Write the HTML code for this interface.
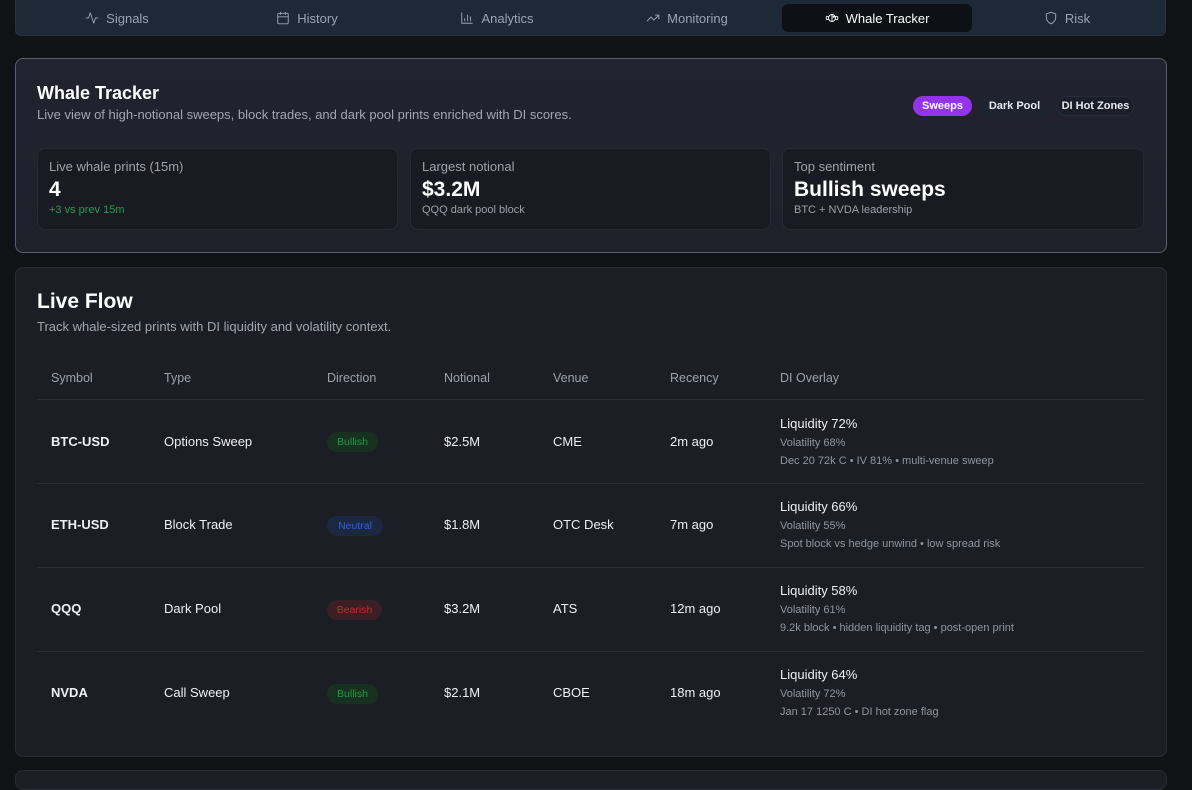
<!DOCTYPE html>
<html><head><meta charset="utf-8"><style>
*{box-sizing:border-box;margin:0;padding:0}
body{width:1192px;height:773px;background:#111216;font-family:"Liberation Sans","DejaVu Sans",sans-serif;color:#f1f3f6;position:relative;overflow:hidden}
.nav{position:absolute;left:15px;top:0;width:1151px;height:36px;background:#1e2938;border:1px solid #27323f;border-top:none;border-radius:0 0 6px 6px}
.tab{position:absolute;top:4px;height:28px;width:190px;display:flex;align-items:center;justify-content:center;gap:7px;font-size:13px;color:#9aa5b3}
.tab svg{width:14px;height:14px;stroke:currentColor;fill:none;stroke-width:1.6;stroke-linecap:round;stroke-linejoin:round}
.tab.act{background:#0e1015;color:#fff;border-radius:6px}
.card1{position:absolute;left:15px;top:58px;width:1152px;height:195px;border:1px solid #5d5a72;border-radius:8px;background:linear-gradient(180deg,#23232f,#1e202a)}
h1{position:absolute;font-weight:600;color:#fff}
.sub{position:absolute;font-size:13px;color:#a0a7b3}
.chip{position:absolute;top:37px;height:20px;border-radius:10px;font-size:11px;font-weight:700;display:flex;align-items:center;justify-content:center;color:#e8eaee;background:#1d2330}
.stat{position:absolute;top:89px;height:82px;width:361px;background:#1a1b22;border:1px solid #272a33;border-radius:8px;padding:10px 11px}
.stat .l{font-size:13px;color:#9ba2ae}
.stat .v{font-size:21px;font-weight:600;color:#fff;margin-top:3px;line-height:26px}
.stat .s{font-size:11px;color:#9aa1ac;margin-top:1px}
.card2{position:absolute;left:15px;top:267px;width:1152px;height:490px;background:#1b1e25;border:1px solid #272c36;border-radius:8px}
.th{position:absolute;top:103px;font-size:12.5px;color:#9ba2ae}
.line{position:absolute;left:21px;width:1107px;height:1px;background:#282d37}
.cell{position:absolute;font-size:13px;color:#eef0f3}
.b{font-weight:700}
.pill{position:absolute;height:20px;border-radius:10px;font-size:10.5px;display:flex;align-items:center;justify-content:center}
.liq{position:absolute;font-size:13px;color:#eef0f3}
.sm{position:absolute;font-size:11px;color:#8e96a2}
.card3{position:absolute;left:15px;top:770px;width:1152px;height:20px;background:#1b1e25;border:1px solid #272c36;border-radius:8px}
</style></head><body>
<div class="nav">
<div class="tab" style="left:6px"><svg viewBox="0 0 24 24"><path d="M22 12h-4l-3 9L9 3l-3 9H2"/></svg>Signals</div>
<div class="tab" style="left:196px"><svg viewBox="0 0 24 24"><rect x="3" y="4" width="18" height="18" rx="2"/><path d="M16 2v4M8 2v4M3 10h18"/></svg>History</div>
<div class="tab" style="left:386px"><svg viewBox="0 0 24 24"><path d="M3 3v18h18M8 17v-4M13 17V7M18 17v-7"/></svg>Analytics</div>
<div class="tab" style="left:576px"><svg viewBox="0 0 24 24"><path d="M22 7l-8.5 8.5-5-5L2 17M16 7h6v6"/></svg>Monitoring</div>
<div class="tab act" style="left:766px"><svg viewBox="0 0 24 24"><circle cx="12" cy="12" r="6"/><path d="M12 6v12M6 10c-3-2-4 0-4 2s1 4 4 2M18 10c3-2 4 0 4 2s-1 4-4 2"/><circle cx="15" cy="10" r="1"/></svg>Whale Tracker</div>
<div class="tab" style="left:956px"><svg viewBox="0 0 24 24"><path d="M12 22s8-4 8-10V5l-8-3-8 3v7c0 6 8 10 8 10z"/></svg>Risk</div>
</div>

<div class="card1">
<h1 style="left:21px;top:24px;font-size:18px">Whale Tracker</h1>
<div class="sub" style="left:21px;top:48px">Live view of high-notional sweeps, block trades, and dark pool prints enriched with DI scores.</div>
<div class="chip" style="left:897px;width:59px;background:#9333ea;color:#fff">Sweeps</div>
<div class="chip" style="left:963px;width:71px">Dark Pool</div>
<div class="chip" style="left:1041px;width:77px;background:#1a1e28;border:1px solid #262b36">DI Hot Zones</div>
<div class="stat" style="left:21px"><div class="l">Live whale prints (15m)</div><div class="v">4</div><div class="s" style="color:#22a04a">+3 vs prev 15m</div></div>
<div class="stat" style="left:394px"><div class="l">Largest notional</div><div class="v">$3.2M</div><div class="s">QQQ dark pool block</div></div>
<div class="stat" style="left:766px;width:362px"><div class="l">Top sentiment</div><div class="v">Bullish sweeps</div><div class="s">BTC + NVDA leadership</div></div>
</div>

<div class="card2">
<h1 style="left:21px;top:22px;font-size:21px">Live Flow</h1>
<div class="sub" style="left:21px;top:51px">Track whale-sized prints with DI liquidity and volatility context.</div>
<div class="th" style="left:35px">Symbol</div><div class="th" style="left:148px">Type</div><div class="th" style="left:311px">Direction</div><div class="th" style="left:428px">Notional</div><div class="th" style="left:537px">Venue</div><div class="th" style="left:654px">Recency</div><div class="th" style="left:764px">DI Overlay</div>
<div class="line" style="top:131px"></div>
<div class="line" style="top:215px"></div>
<div class="line" style="top:299px"></div>
<div class="line" style="top:383px"></div>

<div class="cell b" style="left:35px;top:166px">BTC-USD</div><div class="cell" style="left:148px;top:166px">Options Sweep</div>
<div class="pill" style="left:311px;top:164px;width:51px;background:#17301f;color:#1f9d46">Bullish</div>
<div class="cell" style="left:428px;top:166px">$2.5M</div><div class="cell" style="left:537px;top:166px">CME</div><div class="cell" style="left:654px;top:166px">2m ago</div>
<div class="liq" style="left:764px;top:148px">Liquidity 72%</div><div class="sm" style="left:764px;top:169px">Volatility 68%</div><div class="sm" style="left:764px;top:187px">Dec 20 72k C • IV 81% • multi-venue sweep</div>

<div class="cell b" style="left:35px;top:249px">ETH-USD</div><div class="cell" style="left:148px;top:249px">Block Trade</div>
<div class="pill" style="left:311px;top:248px;width:56px;background:#1b2840;color:#2f5fe0">Neutral</div>
<div class="cell" style="left:428px;top:249px">$1.8M</div><div class="cell" style="left:537px;top:249px">OTC Desk</div><div class="cell" style="left:654px;top:249px">7m ago</div>
<div class="liq" style="left:764px;top:231px">Liquidity 66%</div><div class="sm" style="left:764px;top:252px">Volatility 55%</div><div class="sm" style="left:764px;top:270px">Spot block vs hedge unwind • low spread risk</div>

<div class="cell b" style="left:35px;top:333px">QQQ</div><div class="cell" style="left:148px;top:333px">Dark Pool</div>
<div class="pill" style="left:311px;top:332px;width:55px;background:#3a1f24;color:#c52a2a">Bearish</div>
<div class="cell" style="left:428px;top:333px">$3.2M</div><div class="cell" style="left:537px;top:333px">ATS</div><div class="cell" style="left:654px;top:333px">12m ago</div>
<div class="liq" style="left:764px;top:315px">Liquidity 58%</div><div class="sm" style="left:764px;top:336px">Volatility 61%</div><div class="sm" style="left:764px;top:354px">9.2k block • hidden liquidity tag • post-open print</div>

<div class="cell b" style="left:35px;top:417px">NVDA</div><div class="cell" style="left:148px;top:417px">Call Sweep</div>
<div class="pill" style="left:311px;top:416px;width:51px;background:#17301f;color:#1f9d46">Bullish</div>
<div class="cell" style="left:428px;top:417px">$2.1M</div><div class="cell" style="left:537px;top:417px">CBOE</div><div class="cell" style="left:654px;top:417px">18m ago</div>
<div class="liq" style="left:764px;top:399px">Liquidity 64%</div><div class="sm" style="left:764px;top:420px">Volatility 72%</div><div class="sm" style="left:764px;top:438px">Jan 17 1250 C • DI hot zone flag</div>
</div>
<div class="card3"></div>
</body></html>
